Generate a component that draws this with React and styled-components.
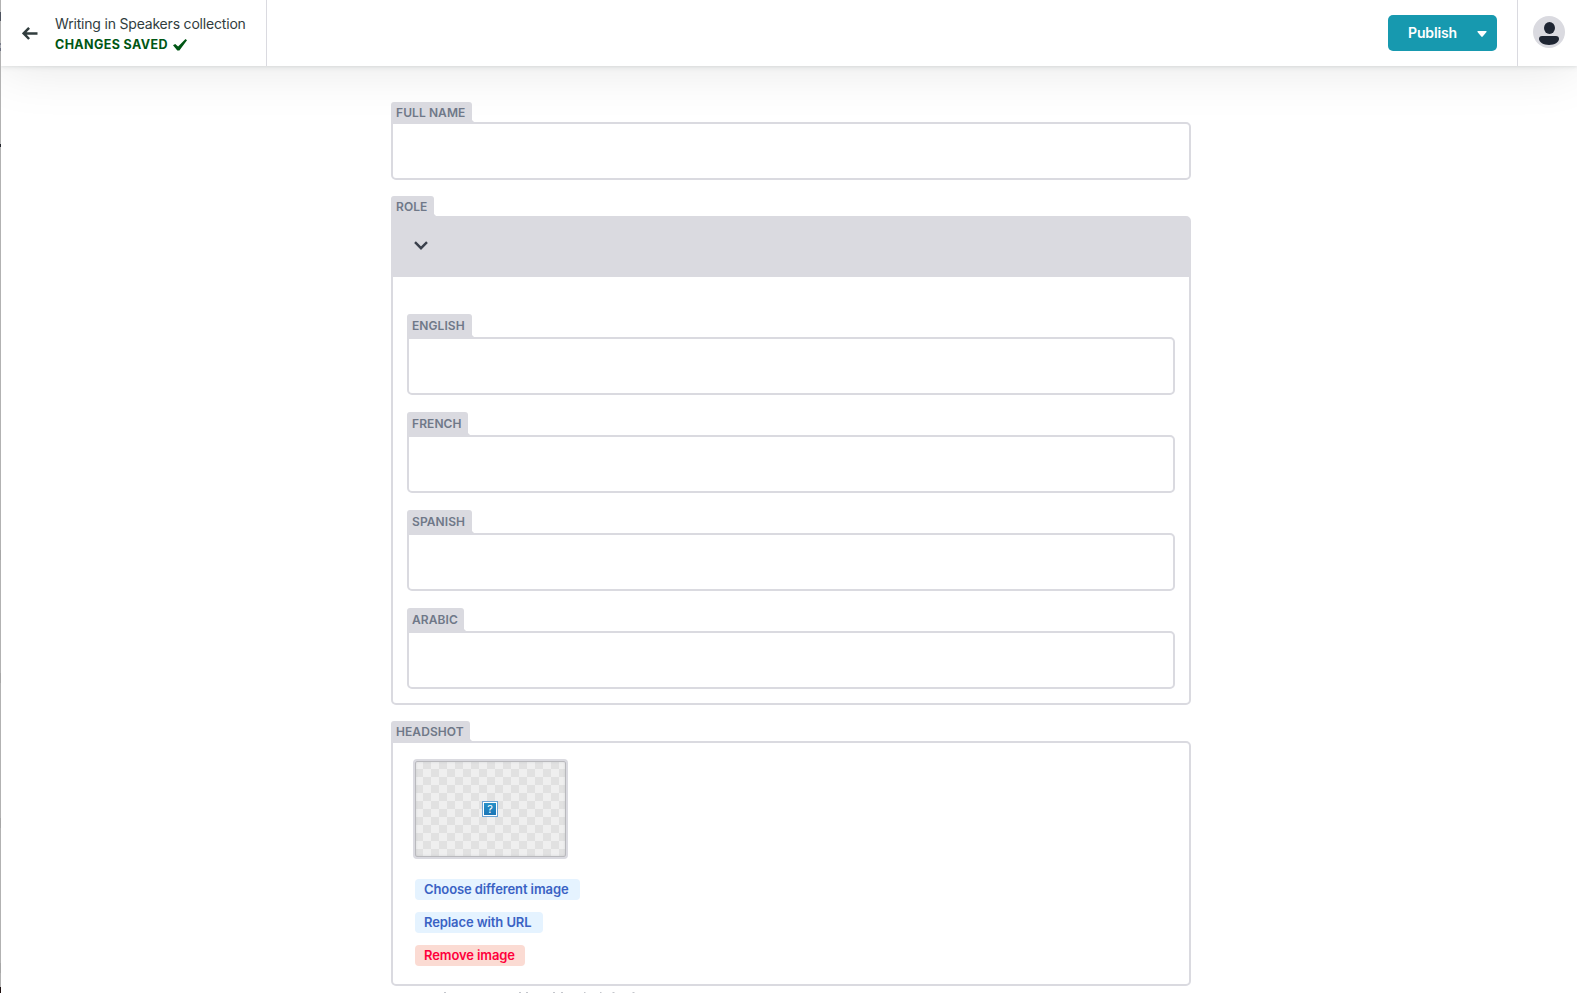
import React from "react";
import styled, { createGlobalStyle } from "styled-components";

const line = "#dadae0";

const GlobalStyle = createGlobalStyle`
  * { box-sizing: border-box; }
  html, body { margin: 0; height: 993px; overflow: hidden; background: #fff; }
  body { font-family: Inter, "Liberation Sans", sans-serif; color: #313d3e; }
  button { font-family: inherit; }
`;

const Screen = styled.div`
  display: grid;
  grid-template-columns: 1px 1fr;
  height: 993px;
  overflow: hidden;
  background: #fff;
`;

const WindowEdge = styled.div`
  z-index: 1;
  background: linear-gradient(
    #b2b2b2 12px, #4d525e 12px 21px, #b2b2b2 21px 43px, #777b88 43px 45px, #a5a7ae 45px 48px,
    #6c7080 48px 51px, #b2b2b2 51px 144px, #23252c 144px 147px, #b2b2b2 147px 550px,
    #a6a6a6 550px 560px, #b2b2b2 560px 673px, #a6a6a6 673px 683px, #b2b2b2 683px 818px,
    #a6a6a6 818px 828px, #b2b2b2 828px 963px, #a6a6a6 963px 973px, #b2b2b2 973px 987px, #1d1010 987px
  );
`;

const Toolbar = styled.header`
  display: flex;
  height: 66px;
  background: #fff;
  box-shadow: 0 2px 6px 0 rgba(68, 74, 87, 0.05), 0 1px 3px 0 rgba(68, 74, 87, 0.1),
    0 2px 54px rgba(0, 0, 0, 0.1);
`;

const BackSection = styled.div`
  display: flex;
  width: 266px;
  padding: 15px 0 0 21px;
  border-right: 1px solid ${line};
`;

const ArrowIcon = styled.svg`
  width: 16px;
  height: 14px;
  margin-top: 11px;
  flex: none;
`;

const BackText = styled.div`
  margin-left: 17px;
  white-space: nowrap;
`;

const CollectionName = styled.div`
  font-size: 14px;
  line-height: 18px;
  letter-spacing: -0.19px;
`;

const SavedStatus = styled.div`
  display: flex;
  align-items: center;
  margin-top: 3px;
  font-size: 12.5px;
  font-weight: 700;
  line-height: 17px;
  letter-spacing: 0.38px;
  color: #005614;
  svg { margin-left: 5px; }
`;

const Actions = styled.div`
  display: flex;
  flex: 1;
  justify-content: flex-end;
  padding: 15px 20px 0 0;
`;

const PublishButton = styled.button`
  display: flex;
  align-items: center;
  justify-content: space-between;
  width: 109px;
  height: 36px;
  padding: 0 10px 1px 20px;
  border: 0;
  border-radius: 5px;
  background: #1799af;
  color: #fff;
  font-size: 14px;
  font-weight: 600;
  letter-spacing: -0.15px;
  svg { margin-top: 2px; }
`;

const Account = styled.div`
  width: 60px;
  padding: 16px 0 0 15px;
  border-left: 1px solid ${line};
`;

const Form = styled.main`
  display: flex;
  flex-direction: column;
  width: 800px;
  margin: 36px 0 0 390px;
`;

const Field = styled.section`
  display: flex;
  flex-direction: column;
  align-items: flex-start;
  margin-bottom: 16px;
`;

const NestedField = styled(Field)`
  margin-bottom: ${(p) => (p.$last ? 0 : 17)}px;
`;

const Label = styled.label`
  position: relative;
  width: ${(p) => p.$width}px;
  height: ${(p) => (p.$nested ? 23 : 20)}px;
  padding-left: 5px;
  border-radius: 3px 3px 0 0;
  background: ${line};
  color: #6f7888;
  font-size: 12px;
  font-weight: 600;
  letter-spacing: 0.08px;
  line-height: ${(p) => (p.$nested ? 24 : 22)}px;
  text-transform: uppercase;
  white-space: nowrap;
  &::after {
    content: "";
    position: absolute;
    left: 100%;
    bottom: 0;
    width: 3px;
    height: 3px;
    background: radial-gradient(circle at 100% 0, transparent 2.6px, ${line} 3.2px);
  }
`;

const TextInput = styled.input`
  display: block;
  width: 100%;
  height: 58px;
  padding: 16px 20px;
  border: 2px solid ${line};
  border-radius: 0 5px 5px 5px;
  background: #fff;
  outline: none;
`;

const ObjectBox = styled.div`
  width: 100%;
  border: 2px solid ${line};
  border-radius: 0 5px 5px 5px;
`;

const ObjectBar = styled.div`
  height: 59px;
  padding: 23px 0 0 21px;
  background: ${line};
  svg { display: block; }
`;

const ObjectFields = styled.div`
  padding: 37px 14px 14px;
`;

const ImageBox = styled.div`
  display: flex;
  flex-direction: column;
  align-items: flex-start;
  width: 100%;
  height: 245px;
  padding: 16px 20px 0;
  border: 2px solid ${line};
  border-radius: 0 5px 5px 5px;
`;

const Thumbnail = styled.div`
  display: flex;
  flex: none;
  align-items: center;
  justify-content: center;
  width: 155px;
  height: 100px;
  margin-bottom: 20px;
  border: 2px solid ${line};
  border-radius: 4px;
  background: conic-gradient(#e1e1e1 25%, #efefef 0 50%, #e1e1e1 0 75%, #efefef 0) 0 0 / 16px 16px;
  box-shadow: inset 0 0 0 1px #b9b9bd, inset 0 0 3px rgba(68, 74, 87, 0.3);
`;

const MissingImage = styled.div`
  width: 16px;
  height: 16px;
  margin-right: 1px;
  border: 1px solid #6fa5d4;
  box-shadow: inset 0 0 0 1px #fff;
  background: linear-gradient(#2793ca, #1b73b4);
  color: #fff;
  font-size: 11px;
  line-height: 14px;
  text-align: center;
`;

const ImageButton = styled.button`
  flex: none;
  width: ${(p) => p.$width}px;
  height: 21px;
  margin: 0 0 12px 2px;
  padding: 0 0 0 9px;
  border: 0;
  border-radius: 4px;
  background: ${(p) => (p.$danger ? "#fbdbd3" : "#e5f3ff")};
  color: ${(p) => (p.$danger ? "#ff003b" : "#3a62c4")};
  font-size: 13px;
  font-weight: 600;
  letter-spacing: -0.1px;
  line-height: 21px;
  text-align: left;
  white-space: nowrap;
`;

const HintEdge = styled.svg`
  display: block;
  margin-top: -10px;
`;

const languages = [
  { name: "English", width: 65 },
  { name: "French", width: 61 },
  { name: "Spanish", width: 65 },
  { name: "Arabic", width: 57 },
];

export default function App() {
  return (
    <Screen>
      <GlobalStyle />
      <WindowEdge />
      <div>
        <Toolbar>
          <BackSection>
            <ArrowIcon viewBox="0 0 16 14" fill="none" stroke="#313d3e" strokeWidth="2.5">
              <path d="M15.500 7.400H2.300M7.100 1.800 1.700 7.400 7.100 13" />
            </ArrowIcon>
            <BackText>
              <CollectionName>Writing in Speakers collection</CollectionName>
              <SavedStatus>
                CHANGES SAVED
                <svg width="14" height="12" viewBox="0 0 14 12" fill="#005614">
                  <path d="M0 6.300 2.200 4.900 5.100 7.500 12.500 0 14 1.300 6.400 11.600 4.300 11.600z" />
                </svg>
              </SavedStatus>
            </BackText>
          </BackSection>
          <Actions>
            <PublishButton>
              Publish
              <svg width="10" height="6" viewBox="0 0 10 6" fill="#fff">
                <path d="M1 0h8q1 0 .5 1L5.700 5.500q-.7.8-1.400 0L.5 1Q0 0 1 0z" />
              </svg>
            </PublishButton>
          </Actions>
          <Account>
            <svg width="32" height="32" viewBox="0 0 32 32">
              <circle cx="16" cy="16" r="16" fill={line} />
              <ellipse cx="16.500" cy="12" rx="5.500" ry="6" fill="#1e2532" />
              <path d="M9 20h14q3 0 3 3c0 3-4.500 6-10 6s-10-3-10-6q0-3 3-3z" fill="#1e2532" />
            </svg>
          </Account>
        </Toolbar>
        <Form>
          <Field>
            <Label $width={81}>Full name</Label>
            <TextInput />
          </Field>
          <Field>
            <Label $width={43}>Role</Label>
            <ObjectBox>
              <ObjectBar>
                <svg width="14" height="9" viewBox="0 0 14 9" fill="none" stroke="#3a404c" strokeWidth="2.400">
                  <path d="M1 1.200 7 7.200 13 1.200" />
                </svg>
              </ObjectBar>
              <ObjectFields>
                {languages.map((l, i) => (
                  <NestedField key={l.name} $last={i === languages.length - 1}>
                    <Label $nested $width={l.width}>{l.name}</Label>
                    <TextInput />
                  </NestedField>
                ))}
              </ObjectFields>
            </ObjectBox>
          </Field>
          <Field>
            <Label $width={79}>Headshot</Label>
            <ImageBox>
              <Thumbnail><MissingImage>?</MissingImage></Thumbnail>
              <ImageButton $width={165}>Choose different image</ImageButton>
              <ImageButton $width={128}>Replace with URL</ImageButton>
              <ImageButton $width={110} $danger>Remove image</ImageButton>
            </ImageBox>
          </Field>
          <HintEdge width="260" height="1" viewBox="0 0 260 1" fill="none" stroke="#c4c6cc">
            <path d="M53 .5h2M128 .5h2M135 .5h2M162 .5h2M170 .5h2M193 .5h1.500M209 .5h1.500M221.500 .5h2M241.500 .5h2" />
          </HintEdge>
        </Form>
      </div>
    </Screen>
  );
}
